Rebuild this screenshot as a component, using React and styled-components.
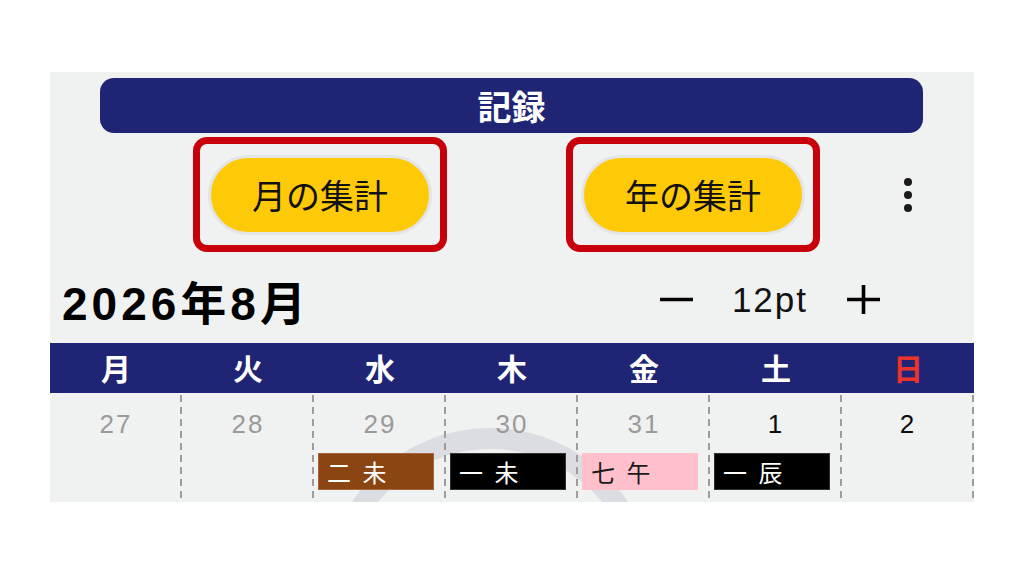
import React from "react";
import styled, { createGlobalStyle } from "styled-components";

const GlobalStyle = createGlobalStyle`
  html, body {
    margin: 0;
    padding: 0;
    background: #ffffff;
  }
  body {
    font-family: "Liberation Sans", "Noto Sans CJK JP", sans-serif;
  }
`;

const NAVY = "#1f2574";

const Page = styled.div`
  width: 1024px;
  height: 576px;
  padding: 72px 0 0 50px;
  box-sizing: border-box;
`;

const Panel = styled.div`
  width: 924px;
  height: 430px;
  background: #f0f1f1;
  display: flex;
  flex-direction: column;
`;

const TitleBar = styled.div`
  margin: 6px 51px 0 50px;
  height: 55px;
  border-radius: 14px;
  background: ${NAVY};
  color: #fff;
  display: flex;
  align-items: center;
  justify-content: center;
  font-family: "Noto Sans CJK JP", sans-serif;
  font-weight: 700;
  font-size: 34px;
`;

const ActionRow = styled.div`
  margin-top: 4px;
  height: 115px;
  display: flex;
  align-items: center;
  padding-left: 143px;
  gap: 119px;
`;

const Highlight = styled.div`
  width: 254px;
  height: 115px;
  box-sizing: border-box;
  border: 7px solid #c8000b;
  border-radius: 14px;
  display: flex;
  align-items: center;
  justify-content: center;
`;

const PillButton = styled.button`
  width: 224px;
  height: 80px;
  border-radius: 40px;
  border: 3px solid #e3e4e6;
  background: #fec907;
  color: #111;
  font-family: "Noto Sans CJK JP", sans-serif;
  font-size: 34px;
  font-weight: 400;
  display: flex;
  align-items: center;
  justify-content: center;
  padding: 0;
`;

const MoreButton = styled.div`
  margin-left: -41px;
  width: 20px;
  display: flex;
  flex-direction: column;
  align-items: center;
  gap: 5px;
`;

const Dot = styled.span`
  width: 8px;
  height: 8px;
  border-radius: 50%;
  background: #1a1a1a;
`;

const MonthRow = styled.div`
  height: 91px;
  display: flex;
  align-items: center;
  padding: 4px 94px 0 12px;
  box-sizing: border-box;
`;

const MonthTitle = styled.div`
  font-family: "Liberation Sans", "Noto Sans CJK JP", sans-serif;
  font-weight: 700;
  font-size: 46px;
  letter-spacing: 4px;
  color: #000;
`;

const SizeControl = styled.div`
  margin-left: auto;
  display: flex;
  align-items: center;
  gap: 39px;
`;

const IconButton = styled.div`
  width: 33px;
  height: 33px;
  display: flex;
  color: #000;
`;

const SizeLabel = styled.div`
  font-size: 35px;
  letter-spacing: 2px;
  color: #111;
`;

const WeekHeader = styled.div`
  height: 50px;
  background: ${NAVY};
  display: grid;
  grid-template-columns: repeat(7, 132px);
  align-items: center;
`;

const DayName = styled.div`
  text-align: center;
  color: ${(p) => p.$color};
  font-family: "Noto Sans CJK JP", sans-serif;
  font-weight: 700;
  font-size: 30px;
  line-height: 1;
  margin-top: -2px;
`;

const WeekBody = styled.div`
  position: relative;
  height: 109px;
  overflow: hidden;
  display: grid;
  grid-template-columns: repeat(7, 132px);
`;

const Ring = styled.div`
  position: absolute;
  left: 274px;
  top: 35px;
  width: 332px;
  height: 332px;
  box-sizing: border-box;
  border-radius: 50%;
  border: 21px solid #dcdde2;
`;

const DayCell = styled.div`
  position: relative;
  z-index: 1;
  padding-top: 2px;
  background: repeating-linear-gradient(
      to bottom,
      #9d9d9d 0 7px,
      transparent 7px 12px
    )
    right 0 top 2px / 2px 100% no-repeat;
`;

const DayNumber = styled.div`
  height: 58px;
  display: flex;
  align-items: center;
  justify-content: center;
  font-size: 26px;
  letter-spacing: 2px;
  color: ${(p) => (p.$muted ? "#9a9a9a" : "#0d0d0d")};
`;

const Tag = styled.div`
  margin-left: 4px;
  width: 116px;
  height: 37px;
  box-sizing: border-box;
  background: ${(p) => p.$bg};
  color: ${(p) => p.$fg};
  border: 1px solid ${(p) => p.$edge};
  display: flex;
  align-items: center;
  padding-left: 8px;
  font-family: "Noto Sans CJK JP", sans-serif;
  font-size: 24px;
  font-weight: 400;
  letter-spacing: 3px;
  white-space: pre;
`;

const days = [
  { name: "月" },
  { name: "火" },
  { name: "水" },
  { name: "木" },
  { name: "金" },
  { name: "土" },
  { name: "日", color: "#e8342c" },
];

const cells = [
  { num: 27, muted: true },
  { num: 28, muted: true },
  { num: 29, muted: true, tag: { text: "二未", bg: "#8b4513", fg: "#fff", edge: "#a9643a" } },
  { num: 30, muted: true, tag: { text: "一未", bg: "#000", fg: "#fff", edge: "#333" } },
  { num: 31, muted: true, tag: { text: "七午", bg: "#ffc0cb", fg: "#1a1a1a", edge: "#ffc0cb" } },
  { num: 1, tag: { text: "一辰", bg: "#000", fg: "#fff", edge: "#333" } },
  { num: 2 },
];

const MinusIcon = () => (
  <svg width="33" height="33" viewBox="0 0 33 33">
    <line x1="0" y1="16.5" x2="33" y2="16.5" stroke="currentColor" strokeWidth="3.6" />
  </svg>
);

const PlusIcon = () => (
  <svg width="33" height="33" viewBox="0 0 33 33">
    <line x1="0" y1="16.5" x2="33" y2="16.5" stroke="currentColor" strokeWidth="3.6" />
    <line x1="16.5" y1="2" x2="16.5" y2="31" stroke="currentColor" strokeWidth="3.6" />
  </svg>
);

const App = () => {
  return (
    <Page>
      <GlobalStyle />
      <Panel>
        <TitleBar>記録</TitleBar>
        <ActionRow>
          <Highlight>
            <PillButton>月の集計</PillButton>
          </Highlight>
          <Highlight>
            <PillButton>年の集計</PillButton>
          </Highlight>
          <MoreButton>
            <Dot />
            <Dot />
            <Dot />
          </MoreButton>
        </ActionRow>
        <MonthRow>
          <MonthTitle>2026年8月</MonthTitle>
          <SizeControl>
            <IconButton>
              <MinusIcon />
            </IconButton>
            <SizeLabel>12pt</SizeLabel>
            <IconButton>
              <PlusIcon />
            </IconButton>
          </SizeControl>
        </MonthRow>
        <WeekHeader>
          {days.map((d) => (
            <DayName key={d.name} $color={d.color || "#fff"}>
              {d.name}
            </DayName>
          ))}
        </WeekHeader>
        <WeekBody>
          <Ring />
          {cells.map((c) => (
            <DayCell key={c.num}>
              <DayNumber $muted={c.muted}>{c.num}</DayNumber>
              {c.tag && (
                <Tag $bg={c.tag.bg} $fg={c.tag.fg} $edge={c.tag.edge}>
                  {c.tag.text[0]} {c.tag.text[1]}
                </Tag>
              )}
            </DayCell>
          ))}
        </WeekBody>
      </Panel>
    </Page>
  );
};

export default App;
